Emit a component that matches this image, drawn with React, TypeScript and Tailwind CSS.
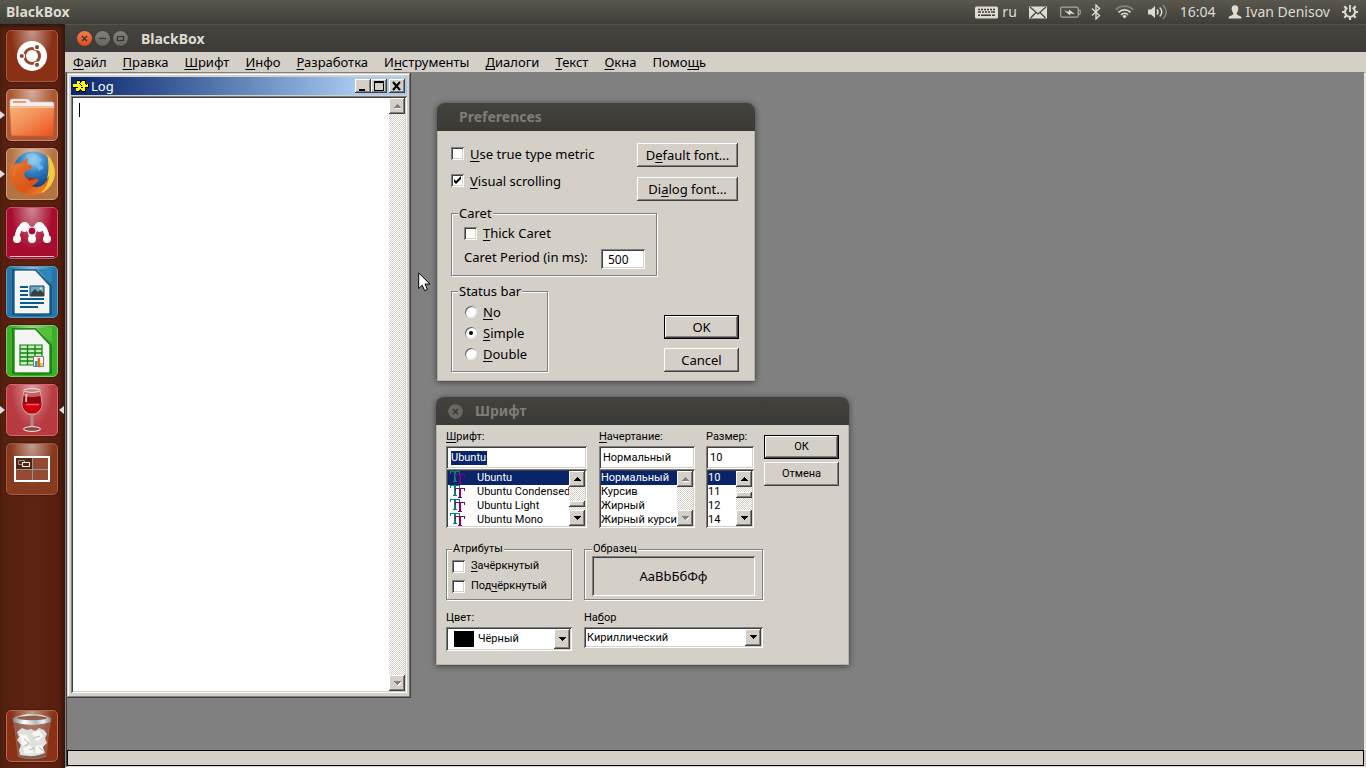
import React from "react";

const RAISED =
  "bg-[#d4d0c8] shadow-[inset_-1px_-1px_0_#404040,inset_1px_1px_0_#ffffff,inset_-2px_-2px_0_#808080]";
const SUNKEN =
  "shadow-[inset_1px_1px_0_#808080,inset_-1px_-1px_0_#ffffff,inset_2px_2px_0_#404040,inset_-2px_-2px_0_#d4d0c8]";
const DITHER =
  "bg-[repeating-conic-gradient(#ffffff_0_25%,#d4d0c8_0_50%)] bg-[length:2px_2px]";
const GROUP =
  "min-w-0 border border-[#808080] shadow-[1px_1px_0_#ffffff,inset_1px_1px_0_#ffffff]";

/* Renders text whose accelerator letter follows an ampersand. */
function Accel({ text }: { text: string }) {
  const i = text.indexOf("&");
  if (i < 0) return <>{text}</>;
  return (
    <span>
      {text.slice(0, i)}
      <span className="underline decoration-1 underline-offset-2">{text[i + 1]}</span>
      {text.slice(i + 2)}
    </span>
  );
}

function Check({ label, checked, className = "" }: { label: string; checked?: boolean; className?: string }) {
  return (
    <label className={`flex items-center ${className}`}>
      <span className="grid">
        <input
          type="checkbox"
          defaultChecked={checked}
          className={`peer col-start-1 row-start-1 size-[13px] appearance-none bg-white ${SUNKEN}`}
        />
        <svg viewBox="0 0 13 13" className="pointer-events-none col-start-1 row-start-1 hidden size-[13px] peer-checked:block">
          <path d="M3 5v3l2 2 5-5V2L5 7z" fill="#000" />
        </svg>
      </span>
      <Accel text={label} />
    </label>
  );
}

function Radio({ label, checked }: { label: string; checked?: boolean }) {
  return (
    <label className="flex h-[21px] items-center gap-1.5">
      <span className="grid">
        <input
          type="radio"
          name="statusbar"
          defaultChecked={checked}
          className="peer col-start-1 row-start-1 size-3 appearance-none rounded-full bg-white shadow-[inset_1px_1px_0_#606060,inset_-1px_-1px_0_#e8e6e0]"
        />
        <span className="pointer-events-none col-start-1 row-start-1 hidden size-1 place-self-center rounded-full bg-black peer-checked:block" />
      </span>
      <Accel text={label} />
    </label>
  );
}

function Push({ label, className = "", primary }: { label: string; className?: string; primary?: boolean }) {
  return (
    <button
      type="button"
      className={`flex h-6 items-center justify-center ${RAISED} ${primary ? "border border-black" : ""} ${className}`}
    >
      <Accel text={label} />
    </button>
  );
}

function Arrow({ up, disabled }: { up?: boolean; disabled?: boolean }) {
  return (
    <svg viewBox="0 0 8 5" className="h-[5px] w-2" shapeRendering="crispEdges">
      {disabled && <path d={up ? "M1 5h8l-4-4z" : "M1 1h8l-4 4z"} fill="#fff" />}
      <path d={up ? "M0 4h8L4 0z" : "M0 0h8L4 4z"} fill={disabled ? "#808080" : "#000"} />
    </svg>
  );
}

function Scrollbar({ disabled, thumb }: { disabled?: boolean; thumb?: "middle" | "low" }) {
  return (
    <div className={`flex w-4 shrink-0 flex-col ${DITHER}`}>
      <button type="button" aria-label="Scroll up" className={`flex h-4 w-4 items-center justify-center ${RAISED}`}>
        <Arrow up disabled={disabled} />
      </button>
      <div className="flex flex-1 flex-col">
        {thumb && <div className={thumb === "low" ? "flex-1" : "h-[5px]"} />}
        {thumb && <div className={`h-[6px] ${RAISED}`} />}
        {thumb === "low" && <div className="h-[3px]" />}
      </div>
      <button type="button" aria-label="Scroll down" className={`flex h-4 w-4 items-center justify-center ${RAISED}`}>
        <Arrow disabled={disabled} />
      </button>
    </div>
  );
}

/* ---------- Panel indicators ---------- */

function Indicators() {
  return (
    <div className="flex items-center text-sm text-[#dfdbd2]">
      <svg viewBox="0 0 23 13" className="mr-1 h-[13px] w-[23px]">
        <rect width="23" height="12" y="0.5" rx="1.5" fill="#dfdbd2" />
        <path d="M3 3.5h2m1 0h2m1 0h2m1 0h2m1 0h2m1 0h2M3 6h3m1 0h2m1 0h2m1 0h2m1 0h4M3 9.2h2m1 0h10m1 0h3" stroke="#3c3b37" strokeWidth="1.5" />
      </svg>
      <span className="mr-3">ru</span>
      <svg viewBox="0 0 18 13" className="mr-[13px] h-[13px] w-[18px]">
        <rect y="0.5" width="18" height="12" fill="#dfdbd2" />
        <path d="M1 1l8 7 8-7M1.5 12L7 6.5M16.5 12L11 6.5" fill="none" stroke="#45443f" strokeWidth="1.2" />
      </svg>
      <svg viewBox="0 0 21 13" className="mr-2.5 h-[13px] w-[21px]">
        <rect x="0.7" y="1.2" width="17.5" height="10" rx="1.5" fill="none" stroke="#aaa79f" strokeWidth="1.2" />
        <path d="M18.5 4h1.7v4.500h-1.700z" fill="none" stroke="#aaa79f" />
        <path d="M4 4.500l5 1.200V3.500l6 4.800-4.800-.9v2.200z" fill="#dfdbd2" />
      </svg>
      <svg viewBox="0 0 10 16" className="mr-3.5 h-4 w-[10px]">
        <path d="M1 4.500l7.500 7L5 15V1l3.500 3.500L1 11.500" fill="none" stroke="#dfdbd2" strokeWidth="1.400" />
      </svg>
      <svg viewBox="0 0 19 14" className="mr-3.5 h-[14px] w-[19px]">
        <g fill="none" strokeWidth="1.700">
          <path d="M0.8 4.800a12 12 0 0 1 17.400 0" stroke="#86847c" />
          <path d="M3.500 7.300a8.500 8.500 0 0 1 12 0" stroke="#dfdbd2" />
          <path d="M6 9.800a5 5 0 0 1 7 0" stroke="#dfdbd2" />
        </g>
        <path d="M7.300 11.300a3 3 0 0 1 4.400 0L9.500 13.500z" fill="#dfdbd2" />
      </svg>
      <svg viewBox="0 0 20 16" className="mr-3 h-4 w-5">
        <path d="M0 5.500h3L7 2v12L3 10.500H0z" fill="#dfdbd2" />
        <g fill="none" strokeWidth="1.500">
          <path d="M9 5.500q2 2.500 0 5M11.800 3.500q4 4.500 0 9" stroke="#dfdbd2" />
          <path d="M15 1q6.500 7 0 14" stroke="#86847c" />
        </g>
      </svg>
      <span className="mr-3">16:04</span>
      <svg viewBox="0 0 14 14" className="mr-1 h-[14px] w-[14px]">
        <path d="M7 .3c2.300 0 3.500 1.500 3.300 3.800C10.200 6 9.500 7 8.700 8c0 1.500.6 2 2 2.500 2 .7 2.800 1.200 2.800 3H.5c0-1.800.8-2.300 2.800-3 1.400-.5 2-1 2-2.500C4.500 7 3.800 6 3.700 4.100 3.500 1.800 4.700.3 7 .3z" fill="#dfdbd2" />
      </svg>
      <span className="mr-3">Ivan Denisov</span>
      <svg viewBox="0 0 16 16" className="size-4">
        <path d="M5.300 3.700a5 5 0 1 0 5.400 0" fill="none" stroke="#dfdbd2" strokeWidth="2" />
        <path d="M8 1v7" stroke="#dfdbd2" strokeWidth="1.800" />
        <path d="M0 8h2.500M13.500 8H16M8 13.500V16M2.300 2.300l1.800 1.800M13.700 2.300l-1.800 1.800M2.300 13.700l1.800-1.800M13.700 13.700l-1.800-1.800" stroke="#dfdbd2" strokeWidth="2.200" />
      </svg>
    </div>
  );
}

/* ---------- Launcher artwork, each on a 52-unit tile ---------- */

const dash = (
  <>
    <circle cx="26" cy="26" r="15" fill="#fff" />
    <circle cx="26" cy="26" r="7.500" fill="none" stroke="#93482f" strokeWidth="3" />
    <g fill="#93482f" stroke="#fff" strokeWidth="1.200">
      <circle cx="15.800" cy="26" r="2.700" />
      <circle cx="31" cy="17.200" r="2.700" />
      <circle cx="31" cy="34.800" r="2.700" />
    </g>
  </>
);

const files = (
  <>
    <path d="M4 12q0-2 2-2h16l3 3h21q2 0 2 2v6H4z" fill="#f3efec" stroke="#c9bdb7" strokeWidth=".6" />
    <path d="M7 12h13v2H7z" fill="#f19a67" />
    <path d="M3.500 18h45L47 45q0 2-2 2H7q-2 0-2-2z" fill="url(#folder)" stroke="#e0592c" strokeWidth=".8" />
    <path d="M4 18.500h44" stroke="#fbc39a" />
  </>
);

const firefox = (
  <>
    <circle cx="27" cy="23.500" r="20" fill="url(#globe)" />
    <path d="M20 7q6-4 11 0l5 5-3 3 5 5-5 3-3-5-8-3z" fill="#8bc8ee" opacity=".55" />
    <path d="M42 9q6 8 6 17-1 20-22 21Q9 46 4 31 2 19 8 11l1 7q2-3 5-3l8-5-1 6 5 2q0 4-6 5l-2 3q1 5 6 6 5-2 9 0-4 5-8 6 8 3 13-2 6-6 5-13l2 3q1-9-2-17z" fill="url(#fox)" />
    <path d="M41 6q8 9 8 19-1 14-14 20 8-8 8-17l-2 3q3-12 0-25z" fill="#f8c93c" />
    <path d="M10 15q4 1 9 3l-8 3-4 9q-1-10 3-15z" fill="#e57532" />
    <path d="M22 30q4-2 7 1l-6 2z" fill="#9a3414" />
  </>
);

const mendeley = (
  <>
    <path d="M11 32C11 25 14 19 18.500 19S25 26 26 32C27 26 29 19 33.500 19S41 25 41 32" fill="none" stroke="#fff" strokeWidth="5" />
    <g fill="#fff">
      <circle cx="18.500" cy="20" r="5" />
      <circle cx="33.500" cy="20" r="5" />
      <circle cx="11" cy="32" r="4" />
      <circle cx="26" cy="32" r="4" />
      <circle cx="41" cy="32" r="4" />
    </g>
    <circle cx="26" cy="24" r="4" fill="#a70f30" stroke="#fff" />
    <path d="M4 49.500h44" stroke="#f4c5ce" />
  </>
);

const page = (
  <path d="M9 5h20l14 15v27H9z" fill="#f4f4f4" stroke="#fff" strokeWidth=".6" />
);

const writer = (
  <>
    <path d="M6 3h24l16 17v29q-20 2-40 0z" fill="#0d527f" opacity=".8" />
    <path d="M31 3h15v14z" fill="#2b86b9" />
    {page}
    <path d="M14 21h8M14 25h8M14 29h8M14 33h24M14 37h24M14 41h18" stroke="#0b5a8e" strokeWidth="1.800" />
    <path d="M24 20h14v10H24z" fill="#69a9c9" stroke="#17496b" />
    <path d="M25 30v-3l4-4 3 3 2-2 4 3v3z" fill="#373f38" />
    <circle cx="35" cy="22.500" r="1.200" fill="#f1d468" />
  </>
);

const calc = (
  <>
    <path d="M6 3h24l16 17v29q-20 2-40 0z" fill="#158008" opacity=".85" />
    <path d="M31 3h15v14z" fill="#58bd3a" />
    {page}
    <path d="M14 20h22v20H14z" fill="#c4edb9" stroke="#128012" strokeWidth="1.200" />
    <path d="M14 24h22M14 28h22M14 32h22M14 36h22M21.500 20v20M29 20v20" stroke="#128012" strokeWidth="1.300" />
    <path d="M27.500 31.500h10v10h-10z" fill="#f5f5f5" stroke="#767a78" />
    <path d="M29 36h2.500v5H29z" fill="#2f96d1" />
    <path d="M31.500 33h2.500v8h-2.500z" fill="#e36b18" />
    <path d="M34 38h2.500v3H34z" fill="#f0c22b" />
  </>
);

const wine = (
  <>
    <path d="M18 6h16l2 13q0 8-6 11-2 1-4 1t-4-1q-6-3-6-11z" fill="#c9605f" stroke="#dcb0ac" strokeWidth=".8" />
    <path d="M17.500 12q8.500 2 17 0l1 8q0 6-6 9h-7q-6-3-6-9z" fill="#8d0610" />
    <path d="M17 19q9 3 18 0 0 7-6 9.500h-6Q17 26 17 19z" fill="#d3000f" />
    <path d="M20 20.500h13" stroke="#ff5b5b" strokeWidth="1.500" />
    <ellipse cx="26" cy="6.500" rx="8" ry="1.800" fill="#b98380" stroke="#efe3df" />
    <path d="M26 31v13" stroke="#c9b9b6" strokeWidth="2.600" />
    <path d="M26 31v13" stroke="#6f4a49" strokeWidth=".8" />
    <ellipse cx="26" cy="45" rx="8.500" ry="2.400" fill="#8e4744" stroke="#f5eae7" />
    <path d="M20.500 10l-.5 8" stroke="#fff" strokeWidth="1.800" opacity=".75" />
  </>
);

const workspaces = (
  <>
    <rect x="9" y="14" width="34" height="24" fill="#934a32" stroke="#fff" strokeWidth="2" />
    <path d="M10 15h16v11H10z" fill="#52230f" />
    <path d="M26.500 15v22M10 26.500h32" stroke="#8d989b" />
    <path d="M12.500 17.500h6v4h-6z" fill="none" stroke="#8d989b" />
    <path d="M16.500 19.500h7v4h-7z" fill="#52230f" stroke="#fff" />
  </>
);

const trash = (
  <>
    <path d="M8 11l4 35q14 4 28 0l4-35z" fill="#9a7c72" opacity=".45" stroke="#c5aaa1" strokeWidth=".7" />
    <path d="M11 22l5-4 5 2 4-1 4 2 4-3 5 2 3 4-2 4 2 5-4 4 2 6q-10 5-25 2l-1-5 2-5-4-5 2-3z" fill="#dfdfdc" />
    <path d="M14 24l7 1 3 8-8 3zM26 23l7-3 4 6-6 6zM17 38l7-3 4 8-9 1zM29 36l7-1 1 7-7 2z" fill="#f6f6f3" />
    <path d="M18 29l5 4-4 3M27 28l7-2M23 40l6-2M33 37l4 4" fill="none" stroke="#aaa" strokeWidth=".8" />
    <path d="M12 46q14 5 28 0" fill="none" stroke="#6a7878" strokeWidth="1.500" />
    <path d="M7 8q19-8 38 0v4q-19 6-38 0z" fill="url(#rim)" />
    <ellipse cx="26" cy="8" rx="15" ry="2.200" fill="#8e5d4b" />
  </>
);

type Tile = { name: string; tone: string; art: React.ReactNode; running?: boolean; focused?: boolean };

const tiles: Tile[] = [
  { name: "Dash", tone: "bg-[#8a3015] border-[#a65c43]", art: dash },
  { name: "Files", tone: "bg-[#aa5934] border-[#cf8a68]", art: files, running: true },
  { name: "Firefox", tone: "bg-[#b47343] border-[#d39d72]", art: firefox, running: true },
  { name: "Mendeley", tone: "bg-[#a60c2e] border-[#cd526d]", art: mendeley },
  { name: "Writer", tone: "bg-[#2875a8] border-[#5b9bc4]", art: writer },
  { name: "Calc", tone: "bg-[#3cae28] border-[#78d06a]", art: calc },
  { name: "Wine", tone: "bg-[#b93b42] border-[#d5666b]", art: wine, running: true, focused: true },
  { name: "Workspaces", tone: "bg-[#883a1f] border-[#a25a40]", art: workspaces },
];

function LauncherTile({ tile }: { tile: Tile }) {
  return (
    <button
      type="button"
      aria-label={tile.name}
      className={`relative size-[52px] rounded-[5px] border shadow-[0_0_2px_#2a0d05] ${tile.tone}`}
    >
      <span className="absolute inset-0 rounded-[5px] bg-[radial-gradient(ellipse_at_50%_0%,rgba(255,255,255,0.5),rgba(255,255,255,0)_60%)]" />
      <svg viewBox="0 0 52 52" className="absolute -top-px -left-px size-[52px]">{tile.art}</svg>
      {tile.running && (
        <svg viewBox="0 0 5 8" className="absolute top-[21px] -left-[7px] h-2 w-[5px]"><path d="M0 0l5 4-5 4z" fill="#ddd" /></svg>
      )}
      {tile.focused && (
        <svg viewBox="0 0 5 8" className="absolute top-[21px] -right-[7px] h-2 w-[5px]"><path d="M5 0L0 4l5 4z" fill="#ddd" /></svg>
      )}
    </button>
  );
}

function Launcher() {
  return (
    <aside className="flex w-[65px] shrink-0 flex-col bg-[linear-gradient(90deg,#55200f,#5e2313_50%,#571f10_90%,#3c150a)] pt-1.5 pb-1.5 pl-1.5 shadow-[inset_0_3px_3px_#35170d]">
      <svg className="absolute size-0" aria-hidden="true">
        <defs>
          <linearGradient id="folder" x1="0" y1="0" x2="1" y2="1">
            <stop offset="0" stopColor="#f6b173" />
            <stop offset=".4" stopColor="#f2935a" />
            <stop offset="1" stopColor="#ea4f1d" />
          </linearGradient>
          <radialGradient id="globe" cx=".5" cy=".2" r=".8">
            <stop offset="0" stopColor="#9fd6f4" />
            <stop offset=".4" stopColor="#2e83c6" />
            <stop offset="1" stopColor="#0c2e6c" />
          </radialGradient>
          <linearGradient id="fox" x1="0" y1="0" x2="1" y2="1">
            <stop offset="0" stopColor="#e8792f" />
            <stop offset=".6" stopColor="#dd5417" />
            <stop offset="1" stopColor="#f5a024" />
          </linearGradient>
          <linearGradient id="rim">
            <stop offset="0" stopColor="#7d8581" />
            <stop offset=".3" stopColor="#fff" />
            <stop offset=".6" stopColor="#b4bab7" />
            <stop offset=".8" stopColor="#eef0ef" />
            <stop offset="1" stopColor="#808884" />
          </linearGradient>
        </defs>
      </svg>
      <nav aria-label="Launcher" className="flex flex-1 flex-col gap-[7px]">
        {tiles.map((t) => (
          <LauncherTile key={t.name} tile={t} />
        ))}
        <div className="mt-auto flex">
          <LauncherTile tile={{ name: "Trash", tone: "bg-[#8a3116] border-[#b66b52]", art: trash }} />
        </div>
      </nav>
    </aside>
  );
}

/* ---------- Windows ---------- */

const menus = ["&Файл", "&Правка", "&Шрифт", "&Инфо", "&Разработка", "И&нструменты", "&Диалоги", "&Текст", "&Окна", "Помо&щь"];

function RoundButton({ kind }: { kind: "close" | "min" | "max" | "dim" }) {
  return (
    <button
      type="button"
      aria-label={kind}
      className={`flex size-[15px] items-center justify-center rounded-full shadow-[0_0_1px_#222] ${
        kind === "close" ? "bg-linear-to-b from-[#f47c58] to-[#dd4814]" : kind === "dim" ? "bg-[#6a6762]" : "bg-linear-to-b from-[#83817a] to-[#67655f]"
      }`}
    >
      <svg viewBox="0 0 15 15" className="size-[15px]" fill="none" stroke="#33322e" strokeWidth="1.200">
        {(kind === "close" || kind === "dim") && <path d="M5 5l5 5M10 5l-5 5" />}
        {kind === "min" && <path d="M4 7.500h7" />}
        {kind === "max" && <path d="M4.500 5.500h6v4h-6z" />}
      </svg>
    </button>
  );
}

function LogWindow() {
  const caption = `flex h-[14px] w-4 items-center justify-center ${RAISED}`;
  return (
    <section className="absolute top-0 left-0 flex h-[625px] w-[344px] flex-col bg-[#d4d0c8] p-1 pb-[5px] shadow-[inset_-1px_-1px_0_#404040,inset_1px_1px_0_#d4d0c8,inset_-2px_-2px_0_#808080,inset_2px_2px_0_#ffffff]">
      <header className="flex h-[18px] items-center bg-linear-to-r from-[#0a246a] to-[#a6caf0] to-85% pr-0.5 pl-0.5 text-white">
        <svg viewBox="0 0 16 14" className="mr-0.5 h-[14px] w-4" shapeRendering="crispEdges">
          <path d="M1 5h3V1h4v2h1V1h4v4h3v4h-3v4H9v-2H7v2H3V9H0V6z" fill="#000" />
          <path d="M0 5h3l1 1V2h3l1 3 1-3h3v3l1 1 2-1v3h-3v4H9l-1-3-2 3H3V8H0z" fill="#ffff00" />
          <path d="M6 4l3 3M8 8h2M5 8l-2 1" stroke="#000" />
        </svg>
        <h2 className="flex-1">Log</h2>
        <button type="button" aria-label="Minimize" className={caption}>
          <svg viewBox="0 0 16 14" className="h-[14px] w-4"><path d="M4 10h6v2H4z" /></svg>
        </button>
        <button type="button" aria-label="Maximize" className={caption}>
          <svg viewBox="0 0 16 14" className="h-[14px] w-4" shapeRendering="crispEdges"><path d="M3 2h10v10H3zM4 4v7h8V4z" fillRule="evenodd" /></svg>
        </button>
        <button type="button" aria-label="Close" className={`ml-0.5 ${caption}`}>
          <svg viewBox="0 0 16 14" className="h-[14px] w-4" stroke="#000" strokeWidth="2"><path d="M4 3l7 8M11 3l-7 8" /></svg>
        </button>
      </header>
      <div className={`mt-px flex flex-1 bg-white p-0.5 ${SUNKEN}`}>
        <div className="flex-1 px-1.5 py-[5px]">
          <div className="h-[14px] w-px bg-black" />
        </div>
        <Scrollbar disabled />
      </div>
    </section>
  );
}

function DialogFrame({ title, close, className, children }: { title: string; close?: boolean; className: string; children: React.ReactNode }) {
  return (
    <section className={`absolute rounded-t-lg shadow-[0_1px_6px_rgba(0,0,0,0.55)] ${className}`}>
      <header className={`flex h-7 items-center gap-3 rounded-t-lg bg-linear-to-b from-[#43423d] to-[#3b3a36] text-sm font-bold text-[#807d78] ${close ? "pl-3" : "pl-[22px]"}`}>
        {close && <RoundButton kind="dim" />}
        <h2>{title}</h2>
      </header>
      <div className="border border-t-0 border-[#b5b1a8] bg-[#d4d0c8]">{children}</div>
    </section>
  );
}

function Preferences() {
  return (
    <DialogFrame title="Preferences" className="top-[30px] left-[370px] w-[318px]">
      <div className="px-[13px] pb-2">
        <div className="flex items-start justify-between pt-3 pr-[3px]">
          <div className="flex flex-col gap-1.5">
            <Check label="&Use true type metric" className="h-[21px] gap-1.5" />
            <Check label="&Visual scrolling" checked className="h-[21px] gap-1.5" />
          </div>
          <div className="flex w-[101px] flex-col gap-2.5">
            <Push label="D&efault font..." />
            <Push label="Di&alog font..." />
          </div>
        </div>
        <fieldset className={`mt-1 w-[206px] px-3 pt-0.5 pb-1.5 ${GROUP}`}>
          <legend className="-ml-1.5 bg-[#d4d0c8] px-px leading-4">Caret</legend>
          <Check label="&Thick Caret" className="h-5 gap-1.5" />
          <div className="mt-1.5 flex items-start justify-between">
            <label htmlFor="period" className="leading-4">Caret Period (in ms):</label>
            <input id="period" defaultValue="500" className={`-mr-px h-5 w-11 bg-white px-[7px] text-xs ${SUNKEN}`} />
          </div>
        </fieldset>
        <div className="mt-[7px] flex items-end justify-between pr-0.5">
          <fieldset className={`w-[97px] px-[13px] pt-0.5 pb-[7px] ${GROUP}`}>
            <legend className="-ml-[7px] bg-[#d4d0c8] px-px leading-4 whitespace-nowrap">Status bar</legend>
            <Radio label="&No" />
            <Radio label="&Simple" checked />
            <Radio label="&Double" />
          </fieldset>
          <div className="flex w-[75px] flex-col gap-[9px]">
            <Push label="OK" primary />
            <Push label="Cancel" />
          </div>
        </div>
      </div>
    </DialogFrame>
  );
}

function TrueType() {
  return (
    <svg viewBox="0 0 16 14" className="mr-[11px] h-[14px] w-4 shrink-0" shapeRendering="crispEdges">
      <path d="M0 0h10v3H9V1H6v9h1v1H3v-1h1V1H1v2H0z" fill="#008080" />
      <path d="M5 3h10v3h-1V4h-3v8h1v1H8v-1h1V4H6v2H5z" fill="#800080" />
    </svg>
  );
}

function Combo({ label, value, options, truetype, className, scroll, selected }: {
  label: string; value: string; options: string[]; truetype?: boolean; className: string; scroll: React.ReactNode; selected?: boolean;
}) {
  return (
    <div className={`flex flex-col ${className}`}>
      <label htmlFor={label} className="h-4 leading-[14px]"><Accel text={label} /></label>
      {selected ? (
        <div className={`flex h-[23px] items-center bg-white px-[5px] ${SUNKEN}`}>
          <input id={label} defaultValue={value} className="h-[14px] w-9 bg-[#0a246a] text-white" />
        </div>
      ) : (
        <input id={label} defaultValue={value} className={`h-[23px] w-full bg-white px-1 ${SUNKEN}`} />
      )}
      <div className={`flex h-[59px] bg-white p-0.5 ${SUNKEN}`}>
        <ul role="listbox" aria-label={label} className="min-w-0 flex-1 overflow-hidden">
          {options.map((o, i) => (
            <li
              key={o}
              role="option"
              aria-selected={i === 0}
              className={`flex h-[14px] items-center whitespace-nowrap ${truetype ? "pl-0.5" : ""} ${i === 0 ? "bg-[#0a246a] text-white" : ""}`}
            >
              {truetype && <TrueType />}
              {o}
            </li>
          ))}
        </ul>
        {scroll}
      </div>
    </div>
  );
}

function DropDown({ label, value, swatch, className }: { label: string; value: string; swatch?: boolean; className: string }) {
  return (
    <div className={className}>
      <label htmlFor={label} className="block h-4 leading-[14px]"><Accel text={label} /></label>
      <div className="relative">
        <select id={label} className={`block w-full appearance-none bg-white ${swatch ? "h-6 pl-8" : "h-[21px] pl-[3px]"} ${SUNKEN}`}>
          <option>{value}</option>
        </select>
        {swatch && <span className="pointer-events-none absolute top-1 left-2 h-4 w-5 bg-black" />}
        <span className={`pointer-events-none absolute inset-y-0.5 right-0.5 flex w-4 items-center justify-center ${RAISED}`}>
          <Arrow />
        </span>
      </div>
    </div>
  );
}

function FontDialog() {
  return (
    <DialogFrame title="Шрифт" close className="top-[324px] left-[369px] w-[413px]">
      <div className="px-[9px] pt-[5px] pb-[13px] font-[Roboto,sans-serif] text-[11px] leading-[14px]">
        <div className="flex items-start">
          <Combo label="&Шрифт:" value="Ubuntu" selected truetype className="w-[141px]" options={["Ubuntu", "Ubuntu Condensed", "Ubuntu Light", "Ubuntu Mono"]} scroll={<Scrollbar thumb="low" />} />
          <Combo label="&Начертание:" value="Нормальный" className="ml-3 w-24" options={["Нормальный", "Курсив", "Жирный", "Жирный курсив"]} scroll={<Scrollbar disabled />} />
          <Combo label="Размер:" value="10" className="ml-[11px] w-12" options={["10", "11", "12", "14"]} scroll={<Scrollbar thumb="middle" />} />
          <div className="mt-[5px] ml-auto flex w-[75px] flex-col gap-[3px]">
            <Push label="ОК" primary />
            <Push label="Отмена" />
          </div>
        </div>
        <div className="mt-3.5 flex gap-3">
          <fieldset className={`w-[126px] px-[5px] pb-[3px] ${GROUP}`}>
            <legend className="bg-[#d4d0c8] px-px">Атрибуты</legend>
            <Check label="&Зачёркнутый" className="h-5 gap-1.5" />
            <Check label="Под&чёркнутый" className="h-5 gap-1.5" />
          </fieldset>
          <fieldset className={`w-[179px] px-[7px] pb-[3px] ${GROUP}`}>
            <legend className="bg-[#d4d0c8] px-px">Образец</legend>
            <div className="flex h-10 items-center justify-center font-['Noto_Sans',sans-serif] text-[13px] shadow-[inset_1px_1px_0_#808080,inset_-1px_-1px_0_#ffffff,inset_2px_2px_0_#404040]">
              АаBbБбФф
            </div>
          </fieldset>
        </div>
        <div className="mt-[11px] flex items-start gap-3">
          <DropDown label="Цвет:" value="Чёрный" swatch className="w-[126px]" />
          <DropDown label="На&бор" value="Кириллический" className="w-[179px]" />
        </div>
      </div>
    </DialogFrame>
  );
}

export default function App() {
  return (
    <div className="flex min-h-screen flex-col bg-[#808080] font-['Noto_Sans',sans-serif] text-[13px] leading-5 text-black">
      <header className="flex h-6 items-center justify-between bg-linear-to-b from-[#5a584d] to-[#3f3e39] pr-2 pl-1.5 text-[#dfdbd2]">
        <h1 className="text-sm font-bold">BlackBox</h1>
        <Indicators />
      </header>
      <div className="flex flex-1">
        <Launcher />
        <main className="flex min-w-0 flex-1 flex-col">
          <div className="flex h-7 items-center gap-[3px] border-t border-[#56544d] bg-linear-to-b from-[#45443f] to-[#3c3b37] pl-3 text-[#dfdbd2]">
            <RoundButton kind="close" />
            <RoundButton kind="min" />
            <RoundButton kind="max" />
            <h2 className="pl-2.5 text-sm font-bold">BlackBox</h2>
          </div>
          <nav className="flex h-5 gap-4 bg-[#d4d0c8] pl-2">
            {menus.map((m) => (
              <button key={m} type="button"><Accel text={m} /></button>
            ))}
          </nav>
          <div className="flex flex-1 flex-col border-b border-l border-white border-l-[#808080]">
            <div className="relative flex-1 border-t border-r-2 border-l border-t-[#808080] border-r-[#e8e6e0] border-l-[#404040]">
              <LogWindow />
              <Preferences />
              <FontDialog />
              <svg viewBox="0 0 13 20" className="absolute top-[199px] left-[351px] h-5 w-[13px]">
                <path d="M.7 1v15.500l3.500-3.300 2.500 5.500 2.700-1.200L7 12h5z" fill="#fff" stroke="#000" />
              </svg>
            </div>
            <footer className="border-r-2 border-b border-l border-[#d4d0c8] border-l-[#404040]">
              <div className="h-4 border border-black bg-[#d4d0c8]" />
            </footer>
          </div>
        </main>
      </div>
    </div>
  );
}
